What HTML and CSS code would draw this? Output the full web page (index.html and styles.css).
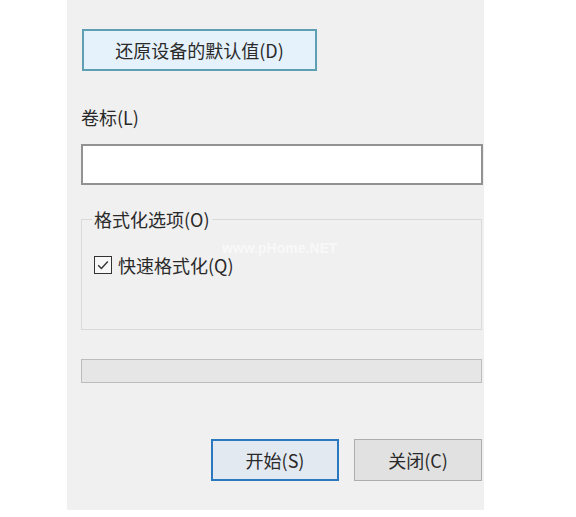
FILE: index.html
```html
<!DOCTYPE html>
<html lang="zh-CN">
<head>
<meta charset="utf-8">
<title>格式化</title>
<link rel="stylesheet" href="styles.css">
</head>
<body>
<div class="page">
  <div class="panel">
    <button class="btn btn-restore">还原设备的默认值(D)</button>
    <div class="label">卷标(L)</div>
    <div class="input"></div>
    <div class="group">
      <span class="legend">格式化选项(O)</span>
      <label class="check-row">
        <span class="checkbox">
          <svg width="14" height="14" viewBox="0 0 14 14"><path d="M2.2 7.2 L5.4 10.4 L11.8 3.6" fill="none" stroke="#333" stroke-width="1.4"/></svg>
        </span>
        <span class="check-text">快速格式化(Q)</span>
      </label>
    </div>
    <div class="progress"></div>
    <div class="actions">
      <button class="btn btn-default">开始(S)</button>
      <button class="btn btn-plain">关闭(C)</button>
    </div>
    <span class="watermark">www.pHome.NET</span>
  </div>
</div>
</body>
</html>
```
FILE: styles.css
```css
html, body {
  margin: 0;
  padding: 0;
  background: #ffffff;
}
body {
  width: 576px;
  height: 517px;
  overflow: hidden;
  font-family: "Noto Sans CJK SC", "Noto Sans", sans-serif;
  color: #2a2a2a;
}
.page {
  display: flex;
  padding-left: 67px;
}
.panel {
  position: relative;
  width: 417px;
  height: 510px;
  box-sizing: border-box;
  background: #f0f0f0;
  padding: 29px 1px 0 14px;
  display: flex;
  flex-direction: column;
  align-items: flex-start;
}
.btn {
  font-family: inherit;
  font-size: 18px;
  line-height: 24px;
  color: #2a2a2a;
  box-sizing: border-box;
  height: 42px;
  padding: 0;
  margin: 0;
  cursor: default;
}
.btn-restore {
  margin-left: 1px;
  width: 235px;
  background: #e5f1fb;
  border: 2px solid #5e9fb4;
}
.label {
  margin-top: 34px;
  font-size: 18px;
  line-height: 24px;
}
.input {
  margin-top: 15px;
  width: 402px;
  height: 41px;
  box-sizing: border-box;
  background: #ffffff;
  border: 2px solid #929292;
}
.group {
  position: relative;
  margin-top: 34px;
  width: 401px;
  height: 111px;
  box-sizing: border-box;
  border: 1px solid #d9d9d9;
  padding: 33px 0 0 12px;
}
.legend {
  position: absolute;
  top: -13px;
  left: 10px;
  padding: 0 2px;
  background: #f0f0f0;
  font-size: 18px;
  line-height: 24px;
}
.check-row {
  display: flex;
  align-items: center;
  height: 24px;
  gap: 6px;
}
.checkbox {
  width: 18px;
  height: 18px;
  box-sizing: border-box;
  border: 1.5px solid #333;
  background: #f7f7f7;
  display: flex;
  align-items: center;
  justify-content: center;
}
.check-text {
  font-size: 18px;
  line-height: 24px;
}
.progress {
  margin-top: 29px;
  width: 401px;
  height: 24px;
  box-sizing: border-box;
  background: #e6e6e6;
  border: 1px solid #bcbcbc;
}
.actions {
  margin-top: 56px;
  width: 401px;
  display: flex;
  justify-content: flex-end;
  gap: 15px;
}
.btn-default,
.btn-plain {
  width: 128px;
}
.btn-default {
  background: #e3e9f0;
  border: 2px solid #2a78c0;
}
.btn-plain {
  background: #e1e1e1;
  border: 1px solid #adadad;
}
.watermark {
  position: absolute;
  left: 155px;
  top: 240px;
  font-family: "Liberation Sans", sans-serif;
  font-weight: bold;
  font-size: 14px;
  color: rgba(255, 255, 255, 0.6);
}
```
